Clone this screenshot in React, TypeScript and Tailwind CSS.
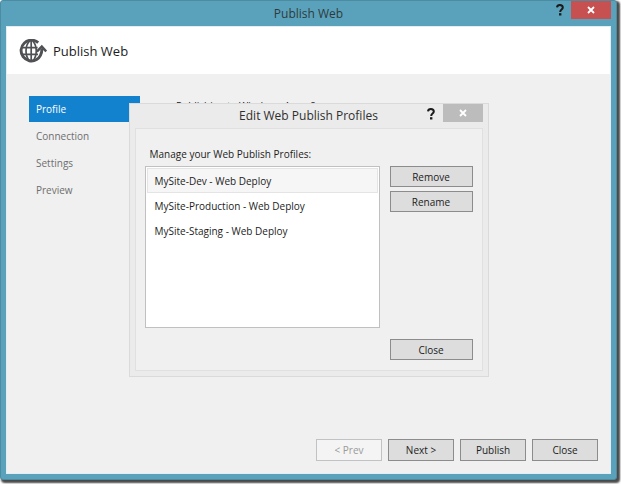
import React from "react";

const steps = ["Profile", "Connection", "Settings", "Preview"];
const profiles = [
  "MySite-Dev - Web Deploy",
  "MySite-Production - Web Deploy",
  "MySite-Staging - Web Deploy",
];

function CloseGlyph() {
  return (
    <svg width="8" height="8" viewBox="0 0 8 8" aria-hidden="true">
      <path d="M1 1 L7 7 M7 1 L1 7" stroke="#fff" strokeWidth="1.8" fill="none" />
    </svg>
  );
}

function HelpGlyph() {
  return (
    <svg width="8" height="12" viewBox="0 0 8 12" aria-hidden="true">
      <path d="M1 3.4 C1.2 1.8 2.3 1 3.8 1 C5.6 1 6.8 1.9 6.8 3.5 C6.8 5.6 4.2 5.4 4.2 8" stroke="#1a1a1a" strokeWidth="2" fill="none" />
      <rect x="3" y="9.2" width="2.4" height="2.3" fill="#1a1a1a" />
    </svg>
  );
}

function GlobeIcon() {
  return (
    <svg width="28" height="24" viewBox="0 0 28 24" fill="none" stroke="#505154" aria-hidden="true">
      <path d="M19.2 3.6 A10.4 10.4 0 1 0 17.6 20.6 C21.2 18.4 22.8 14.6 23 9.5" strokeWidth="2.9" />
      <path d="M17.8 12.6 L22.8 7.6 L27.2 12.4" strokeWidth="2.5" />
      <path d="M2.5 8.6 H18.6 M2.5 15.4 H19 M12.2 2 V22" strokeWidth="1.7" />
      <path d="M10.6 2 C5.8 7 5.8 17 10.6 22 M13.8 2 C18.4 7 18.4 17 13.8 22" strokeWidth="1.7" />
    </svg>
  );
}

function PushButton({ children, disabled, size }: { children: string; disabled?: boolean; size: string }) {
  return (
    <button
      type="button"
      disabled={disabled}
      className={`${size} border border-[#8c8c8c] bg-[#dddddd] text-[10px] leading-4 text-[#1c1c1c] disabled:border-[#bfc3c5] disabled:bg-[#f4f4f4] disabled:text-[#9a9a9a]`}
    >
      {children}
    </button>
  );
}

function EditProfilesDialog() {
  return (
    <section
      role="dialog"
      aria-labelledby="edit-title"
      className="flex w-[360px] flex-col border border-[#dadada] bg-[#ebebeb] px-[5px] pb-[5px]"
    >
      <header className="relative flex h-6 items-center justify-center">
        <h2 id="edit-title" className="text-[12px] leading-5 text-[#2f2f2f]">Edit Web Publish Profiles</h2>
        <div className="absolute top-0 right-0 flex items-start">
          <button type="button" aria-label="Help" className="px-2 py-1"><HelpGlyph /></button>
          <button type="button" aria-label="Close dialog" className="flex h-[18px] w-10 items-center justify-center bg-[#bcbcbc]"><CloseGlyph /></button>
        </div>
      </header>
      <div className="border border-[#e0e0e0] bg-[#f0f0f0] px-[9px] pt-[17px] pb-2.5">
        <h3 id="list-label" className="px-[5px] text-[10px] leading-4 text-[#1c1c1c]">Manage your Web Publish Profiles:</h3>
        <div className="mt-1 flex justify-between">
          <ul aria-labelledby="list-label" className="h-[162px] w-[235px] border border-[#c0c0c0] bg-white p-px">
            {profiles.map((name, i) => (
              <li
                key={name}
                className={`flex h-[25px] items-center border px-[7px] text-[10px] leading-4 text-[#1c1c1c] ${i === 0 ? "border-[#e4e4e4] bg-[#f6f6f6]" : "border-transparent"}`}
              >
                {name}
              </li>
            ))}
          </ul>
          <div className="flex flex-col gap-1">
            <PushButton size="w-[83px] h-[21px]">Remove</PushButton>
            <PushButton size="w-[83px] h-[21px]">Rename</PushButton>
          </div>
        </div>
        <div className="mt-[11px] flex justify-end">
          <PushButton size="w-[83px] h-[21px]">Close</PushButton>
        </div>
      </div>
    </section>
  );
}

export default function App() {
  return (
    <div className="min-h-screen bg-white pr-1 pb-1 font-['Open_Sans','Noto_Sans',sans-serif]">
      <main className="relative flex min-h-[calc(100vh-4px)] flex-col rounded-[3px] border border-[#4d8ba1] bg-[#5aa2bb] px-[5px] pb-[5px] shadow-[2px_2px_2px_1px_#4a4a4a]">
        <header className="relative flex h-[25px] items-center justify-center">
          <h1 className="text-[12px] leading-5 text-[#2f3a3e]">Publish Web</h1>
          <div className="absolute top-0 right-0 flex items-start">
            <button type="button" aria-label="Help" className="px-[7px] py-[3px]"><HelpGlyph /></button>
            <button type="button" aria-label="Close window" className="flex h-[18px] w-10 items-center justify-center bg-[#c75050]"><CloseGlyph /></button>
          </div>
        </header>
        <div className="flex grow flex-col border border-[#e3eef2] bg-[#f0f0f0]">
          <div className="flex h-[47px] items-center gap-1.5 bg-white px-3">
            <GlobeIcon />
            <h2 className="text-[13px] leading-5 text-[#1c1c1c]">Publish Web</h2>
          </div>
          <div className="flex grow px-[22px] pt-[22px]">
            <nav className="flex w-[111px] flex-col gap-px">
              {steps.map((step, i) => (
                <a
                  key={step}
                  href="#"
                  className={`flex h-[26px] items-center px-[7px] text-[10px] leading-4 ${i === 0 ? "bg-[#1382ce] text-white" : "text-[#6e6e6e]"}`}
                >
                  {step}
                </a>
              ))}
            </nav>
            <p className="px-9 pt-0.5 text-[10px] leading-4 text-[#1c1c1c]">Publishing to Windows Azure?</p>
          </div>
          <footer className="flex justify-end gap-1.5 px-3 pb-3">
            <PushButton size="w-[66px] h-[22px]" disabled>{"< Prev"}</PushButton>
            <PushButton size="w-[66px] h-[22px]">{"Next >"}</PushButton>
            <PushButton size="w-[66px] h-[22px]">Publish</PushButton>
            <PushButton size="w-[66px] h-[22px]">Close</PushButton>
          </footer>
        </div>
        <div className="absolute inset-0 flex items-center justify-center">
          <EditProfilesDialog />
        </div>
      </main>
    </div>
  );
}
